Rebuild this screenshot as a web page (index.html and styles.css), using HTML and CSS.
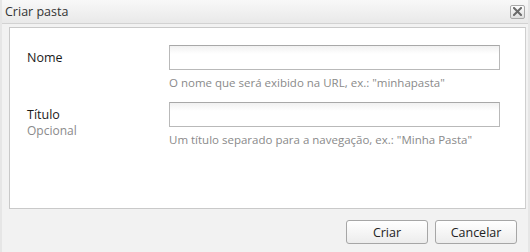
FILE: index.html
```html
<!DOCTYPE html>
<html lang="pt">
<head>
<meta charset="utf-8">
<title>Criar pasta</title>
<link rel="stylesheet" href="styles.css">
</head>
<body>
<div class="dialog">
  <div class="titlebar">
    <span class="title">Criar pasta</span>
    <button class="close" type="button" aria-label="Fechar">
      <svg width="9" height="9" viewBox="0 0 9 9"><path d="M1 1L8 8M8 1L1 8" stroke="#6a6a6a" stroke-width="2" stroke-linecap="square" fill="none"/></svg>
    </button>
  </div>
  <div class="content">
    <div class="panel">
      <div class="row">
        <div class="label"><span class="name">Nome</span></div>
        <div class="field">
          <input class="input" type="text">
          <div class="hint">O nome que será exibido na URL, ex.: "minhapasta"</div>
        </div>
      </div>
      <div class="row">
        <div class="label"><span class="name">Título</span><span class="opt">Opcional</span></div>
        <div class="field">
          <input class="input" type="text">
          <div class="hint">Um título separado para a navegação, ex.: "Minha Pasta"</div>
        </div>
      </div>
    </div>
  </div>
  <div class="footer">
    <button class="btn" type="button">Criar</button>
    <button class="btn" type="button">Cancelar</button>
  </div>
</div>
</body>
</html>
```
FILE: styles.css
```css
html, body {
  margin: 0;
  padding: 0;
}
body {
  width: 530px;
  height: 252px;
  overflow: hidden;
  background: #f2f2f2;
  font-family: "Open Sans", "DejaVu Sans", sans-serif;
  font-size: 12px;
  color: #222;
}
.dialog {
  display: flex;
  flex-direction: column;
  height: 252px;
  box-sizing: border-box;
  border-left: 2px solid #e6e6e6;
  border-right: 2px solid #e6e6e6;
}
.titlebar {
  height: 24px;
  box-sizing: border-box;
  display: flex;
  align-items: center;
  justify-content: space-between;
  padding: 0 3px 0 3px;
  background: linear-gradient(#f8f8f8, #e9e9e9);
  border-bottom: 1px solid #d2d2d2;
}
.title {
  font-size: 12.5px;
  color: #333;
  padding-bottom: 1px;
}
.close {
  width: 15px;
  height: 14px;
  padding: 0;
  margin: 0;
  display: flex;
  align-items: center;
  justify-content: center;
  border: 1px solid #a9a9a9;
  border-radius: 2px;
  background: linear-gradient(#fdfdfd, #dedede);
}
.content {
  padding: 3px 2px 0 7px;
}
.panel {
  height: 182px;
  box-sizing: border-box;
  background: #fff;
  border: 1px solid #c9c9c9;
  border-right-color: #cfcfcf;
  padding: 17px 0 0 17px;
  display: flex;
  flex-direction: column;
  gap: 11px;
}
.row {
  display: flex;
}
.label {
  width: 142px;
  display: flex;
  flex-direction: column;
  padding-top: 4px;
}
.name {
  font-size: 12.5px;
  color: #1a1a1a;
  line-height: 17px;
}
.opt {
  color: #8a8a8a;
  line-height: 15px;
}
.field {
  display: flex;
  flex-direction: column;
}
.input {
  width: 331px;
  height: 25px;
  box-sizing: border-box;
  margin: 0;
  border: 1px solid #b9b9b9;
  border-top-color: #a8a8a8;
  background: linear-gradient(#f1f1f1, #ffffff 8px);
  font: inherit;
}
.hint {
  color: #8a8a8a;
  font-size: 11.5px;
  margin-top: 5px;
  line-height: 16px;
}
.footer {
  flex: 1;
  display: flex;
  justify-content: flex-end;
  align-items: flex-start;
  gap: 7px;
  padding: 11px 11px 0 0;
}
.btn {
  width: 82px;
  height: 24px;
  margin: 0;
  padding: 0;
  border: 1px solid #a6a6a6;
  border-radius: 3px;
  background: linear-gradient(#ffffff, #ececec);
  font-family: inherit;
  font-size: 12.5px;
  color: #222;
}
```
